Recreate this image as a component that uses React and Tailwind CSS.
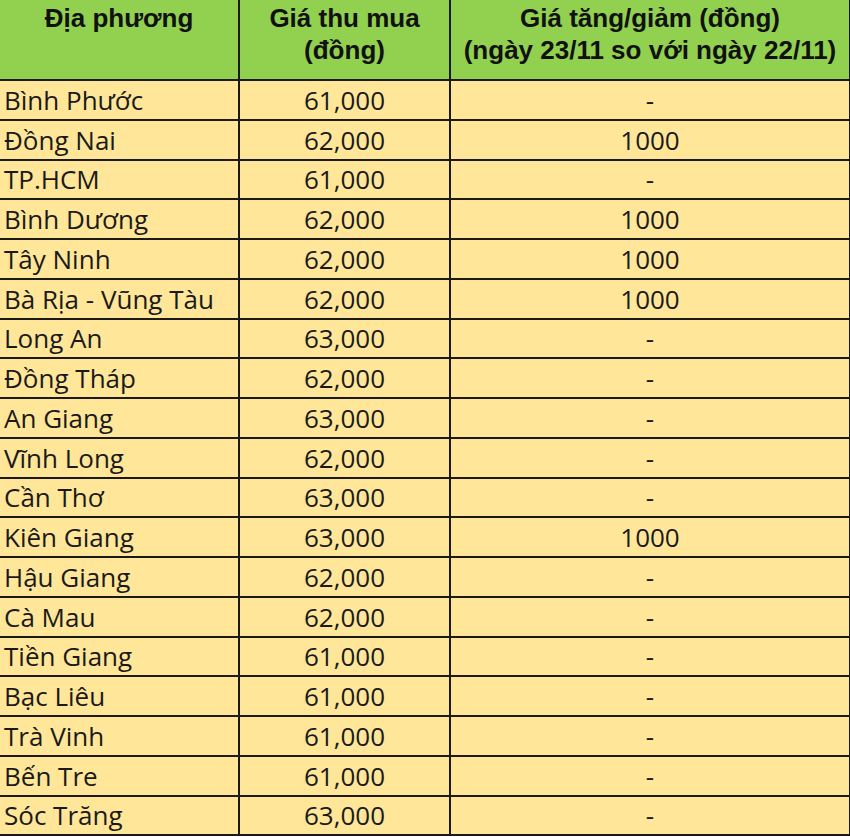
import React from "react";

const rows = [
  ["Bình Phước", "61,000", "-"],
  ["Đồng Nai", "62,000", "1000"],
  ["TP.HCM", "61,000", "-"],
  ["Bình Dương", "62,000", "1000"],
  ["Tây Ninh", "62,000", "1000"],
  ["Bà Rịa - Vũng Tàu", "62,000", "1000"],
  ["Long An", "63,000", "-"],
  ["Đồng Tháp", "62,000", "-"],
  ["An Giang", "63,000", "-"],
  ["Vĩnh Long", "62,000", "-"],
  ["Cần Thơ", "63,000", "-"],
  ["Kiên Giang", "63,000", "1000"],
  ["Hậu Giang", "62,000", "-"],
  ["Cà Mau", "62,000", "-"],
  ["Tiền Giang", "61,000", "-"],
  ["Bạc Liêu", "61,000", "-"],
  ["Trà Vinh", "61,000", "-"],
  ["Bến Tre", "61,000", "-"],
  ["Sóc Trăng", "63,000", "-"],
];

const App = () => {
  return (
    <div className="w-[850px] h-[837px] bg-white">
      <table className="w-[850px] border-collapse table-fixed">
        <colgroup>
          <col className="w-[239px]" />
          <col className="w-[211px]" />
          <col className="w-[400px]" />
        </colgroup>
        <thead>
          <tr className="h-[80px] bg-[#92d050] text-[#111] font-['Liberation_Sans',Arial,sans-serif] font-bold text-[26px] leading-[32px]">
            <th className="border-r-2 border-b-2 border-[#1a1a1a] align-top pt-[2px] text-center">
              Địa phương
            </th>
            <th className="border-r-2 border-b-2 border-[#1a1a1a] align-top pt-[2px] text-center">
              Giá thu mua
              <br />
              (đồng)
            </th>
            <th className="border-r-2 border-b-2 border-[#1a1a1a] align-top pt-[2px] text-center whitespace-nowrap">
              Giá tăng/giảm (đồng)
              <br />
              (ngày 23/11 so với ngày 22/11)
            </th>
          </tr>
        </thead>
        <tbody className="bg-[#ffe699] text-[#1a1a1a] font-['Open_Sans','Noto_Sans',sans-serif] text-[26px]">
          {rows.map((r, i) => (
            <tr key={i} className="h-[39.75px]">
              <td className="border-r-2 border-b-2 border-[#1a1a1a] pl-[4px] leading-none whitespace-nowrap">
                {r[0]}
              </td>
              <td className="border-r-2 border-b-2 border-[#1a1a1a] text-center leading-none">
                {r[1]}
              </td>
              <td className="border-r-2 border-b-2 border-[#1a1a1a] text-center leading-none">
                {r[2]}
              </td>
            </tr>
          ))}
        </tbody>
      </table>
    </div>
  );
};

export default App;
